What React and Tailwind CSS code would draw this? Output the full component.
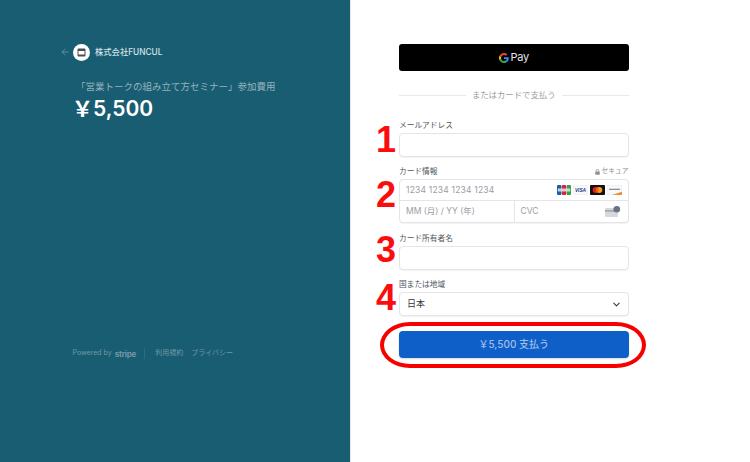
import React from "react";
import { ChevronDown, ArrowLeft } from "lucide-react";

const font = { fontFamily: '"Inter","Noto Sans CJK JP",sans-serif' };

function GLogo() {
  return (
    <svg width="10" height="10" viewBox="0 0 24 24">
      <path fill="#EA4335" d="M12 4.800c1.800 0 3.300.6 4.600 1.800l3.400-3.400C17.900 1.200 15.200 0 12 0 7.300 0 3.300 2.700 1.300 6.600l4 3.100C6.200 6.800 8.900 4.800 12 4.800z" />
      <path fill="#4285F4" d="M23.500 12.300c0-.9-.1-1.600-.2-2.300H12v4.500h6.500c-.3 1.500-1.100 2.700-2.400 3.600l3.700 2.900c2.300-2.100 3.700-5.200 3.700-8.700z" />
      <path fill="#FBBC05" d="M5.300 14.300c-.2-.7-.4-1.500-.4-2.300s.1-1.600.4-2.300l-4-3.100C.5 8.200 0 10 0 12s.5 3.800 1.300 5.400l4-3.100z" />
      <path fill="#34A853" d="M12 24c3.200 0 6-1.100 7.900-2.900l-3.700-2.900c-1 .7-2.400 1.100-4.200 1.100-3.100 0-5.800-2-6.700-4.900l-4 3.100C3.300 21.300 7.300 24 12 24z" />
    </svg>
  );
}

function LockIcon() {
  return (
    <svg width="5" height="6" viewBox="0 0 5 6">
      <path d="M1.200 2.600V1.700a1.300 1.300 0 0 1 2.600 0v.9" fill="none" stroke="#8a8f96" strokeWidth="0.800" />
      <rect x="0.300" y="2.500" width="4.400" height="3.300" rx="0.600" fill="#8a8f96" />
    </svg>
  );
}

function CardBrands() {
  return (
    <div className="flex items-center gap-[2px]">
      <svg width="14" height="10" viewBox="0 0 14 10">
        <rect x="0" width="4.400" height="10" rx="1" fill="#1a5fa8" />
        <rect x="4.800" width="4.400" height="10" rx="1" fill="#d3253b" />
        <rect x="9.600" width="4.400" height="10" rx="1" fill="#3b9b48" />
        <rect x="0.800" y="3.500" width="12.400" height="3" fill="#e9eef2" opacity="0.8" />
      </svg>
      <svg width="15" height="10" viewBox="0 0 15 10">
        <rect x="0.250" y="0.250" width="14.500" height="9.500" rx="1" fill="#f8f9fb" stroke="#dfe3ea" strokeWidth="0.500" />
        <text x="7.500" y="6.800" textAnchor="middle" fontSize="4.800" fontWeight="700" fontStyle="italic" fill="#27377f" fontFamily="Liberation Sans, sans-serif">VISA</text>
      </svg>
      <svg width="15" height="10" viewBox="0 0 15 10">
        <rect width="15" height="10" rx="1" fill="#111" />
        <circle cx="5.700" cy="5" r="3" fill="#e2231a" />
        <circle cx="9.300" cy="5" r="3" fill="#f79e1b" />
        <path d="M7.500 2.600a3 3 0 0 1 0 4.800a3 3 0 0 1 0-4.800z" fill="#ff5f00" />
      </svg>
      <svg width="15" height="10" viewBox="0 0 15 10">
        <rect x="0.250" y="0.250" width="14.500" height="9.500" rx="1" fill="#f8f9fb" stroke="#dfe3ea" strokeWidth="0.500" />
        <rect x="2" y="3.700" width="11" height="1.300" fill="#8b8f98" />
        <path d="M5 10 L15 6.800 V9 a1 1 0 0 1-1 1z" fill="#f08a2c" />
      </svg>
    </div>
  );
}

function CvcIcon() {
  return (
    <svg width="16" height="11" viewBox="0 0 16 11">
      <rect x="0" y="2" width="13" height="9" rx="1" fill="#d5d8dd" />
      <rect x="0" y="4" width="13" height="1.800" fill="#a5a9b0" />
      <circle cx="11.800" cy="3.300" r="3.300" fill="#6b7280" />
    </svg>
  );
}

function Label({ children }) {
  return <div className="h-[13px] text-[7.700px] leading-[13px] text-[#50545a]">{children}</div>;
}

function Field({ label, number, numberClass, children }) {
  return (
    <div className="relative">
      <span className={`absolute left-[-23px] text-[36px] leading-[40px] font-bold text-[#fb0d0d] ${numberClass}`} style={{ fontFamily: '"Liberation Sans",sans-serif' }}>
        {number}
      </span>
      {label}
      {children}
    </div>
  );
}

const boxClass = "h-[24px] rounded-[4px] border border-[#e3e5e8] bg-white shadow-[0_1px_1px_rgba(0,0,0,0.05)]";

export default function App() {
  return (
    <div className="flex h-[462px] w-[750px] overflow-hidden bg-white" style={font}>
      <aside className="flex h-full w-[351px] flex-col border-r border-[#e5e7ea] bg-[#195d72] pb-[103px] pl-[60px] pt-[43px]">
        <div className="flex h-[18px] items-center">
          <ArrowLeft size={10} strokeWidth={1.600} className="text-[#7fa5b2]" />
          <span className="ml-[3px] flex h-[17px] w-[17px] items-center justify-center rounded-full bg-white">
            <svg width="9" height="9" viewBox="0 0 9 9">
              <rect x="0.500" y="0.500" width="8" height="8" rx="1" fill="#4a4f55" />
              <rect x="1.500" y="3" width="6" height="3.500" fill="#fff" />
            </svg>
          </span>
          <span className="ml-[5px] text-[8.300px] font-medium text-[#d6e2e6]">株式会社FUNCUL</span>
        </div>
        <div className="ml-[16px] mt-[19px] h-[14px] text-[9.500px] leading-[14px] text-[#94b3bd]">「営業トークの組み立て方セミナー」参加費用</div>
        <div className="ml-[12px] mt-[1px] text-[21px] leading-[28px] font-semibold text-white">￥5,500</div>
        <div className="ml-[12.500px] mt-auto flex h-[11px] items-center text-[7px] text-[#7099a6]">
          <span>Powered by</span>
          <span className="ml-[3px] text-[8px] font-bold tracking-[-0.2px]">stripe</span>
          <span className="ml-[8px] h-[11px] w-px bg-[#2f6b80]" />
          <span className="ml-[10px]">利用規約</span>
          <span className="ml-[8px]">プライバシー</span>
        </div>
      </aside>

      <main className="relative flex-1 pl-[48px] pt-[44px]">
        <div className="w-[229.500px]">
          <div className="flex h-[27px] items-center justify-center gap-[2px] rounded-[3px] bg-black">
            <GLogo />
            <span className="text-[11px] tracking-[-0.3px] text-[#e5e5e5]">Pay</span>
          </div>

          <div className="mt-[17px] flex h-[14px] items-center gap-[6px] text-[8.400px] text-[#9a9da3]">
            <span className="h-px flex-1 bg-[#e8e9eb]" />
            <span>またはカードで支払う</span>
            <span className="h-px flex-1 bg-[#e8e9eb]" />
          </div>

          <div className="mt-[17px] flex flex-col gap-[8px]">
            <Field number="1" numberClass="top-[1px]" label={<Label>メールアドレス</Label>}>
              <div className={`mt-[1px] ${boxClass}`} />
            </Field>

            <Field
              number="2"
              numberClass="top-[10px]"
              label={
                <div className="flex items-center justify-between">
                  <Label>カード情報</Label>
                  <span className="flex items-center gap-[1.500px] text-[6.800px] text-[#8a8f96]">
                    <LockIcon />
                    セキュア
                  </span>
                </div>
              }
            >
              <div className="mb-[1px] mt-[1px] rounded-[4px] border border-[#e3e5e8] bg-white text-[8.500px] text-[#9a9da3] shadow-[0_1px_1px_rgba(0,0,0,0.05)]">
                <div className="flex h-[21px] items-center justify-between border-b border-[#e3e5e8] pl-[6px] pr-[6px]">
                  <span className="tracking-[0.2px]">1234 1234 1234 1234</span>
                  <CardBrands />
                </div>
                <div className="flex h-[21px] items-center">
                  <span className="flex h-full w-[114.500px] items-center border-r border-[#e3e5e8] pl-[6px]">MM (月) / YY (年)</span>
                  <span className="flex flex-1 items-center justify-between pl-[6px] pr-[7px]">
                    CVC
                    <CvcIcon />
                  </span>
                </div>
              </div>
            </Field>

            <Field number="3" numberClass="top-[-2px]" label={<Label>カード所有者名</Label>}>
              <div className={`mt-[1px] ${boxClass}`} />
            </Field>

            <Field number="4" numberClass="top-[0px]" label={<Label>国または地域</Label>}>
              <div className={`mt-[1px] flex items-center justify-between pl-[7px] pr-[6px] text-[9px] text-[#30343a] ${boxClass}`}>
                <span>日本</span>
                <ChevronDown size={11} strokeWidth={2.200} className="text-[#30343a]" />
              </div>
            </Field>
          </div>

          <div className="relative mt-[15px]">
            <div className="flex h-[27px] items-center justify-center rounded-[4px] bg-[#0f5fc9] text-[10px] font-medium text-[#9fbde8] shadow-[0_1px_2px_rgba(0,0,0,0.15)]">
              ￥5,500 支払う
            </div>
            <div className="absolute left-[-19px] top-[-9px] h-[46px] w-[266px] rounded-[30px/23px] border-[4px] border-[#f60000]" />
          </div>
        </div>
      </main>
    </div>
  );
}
